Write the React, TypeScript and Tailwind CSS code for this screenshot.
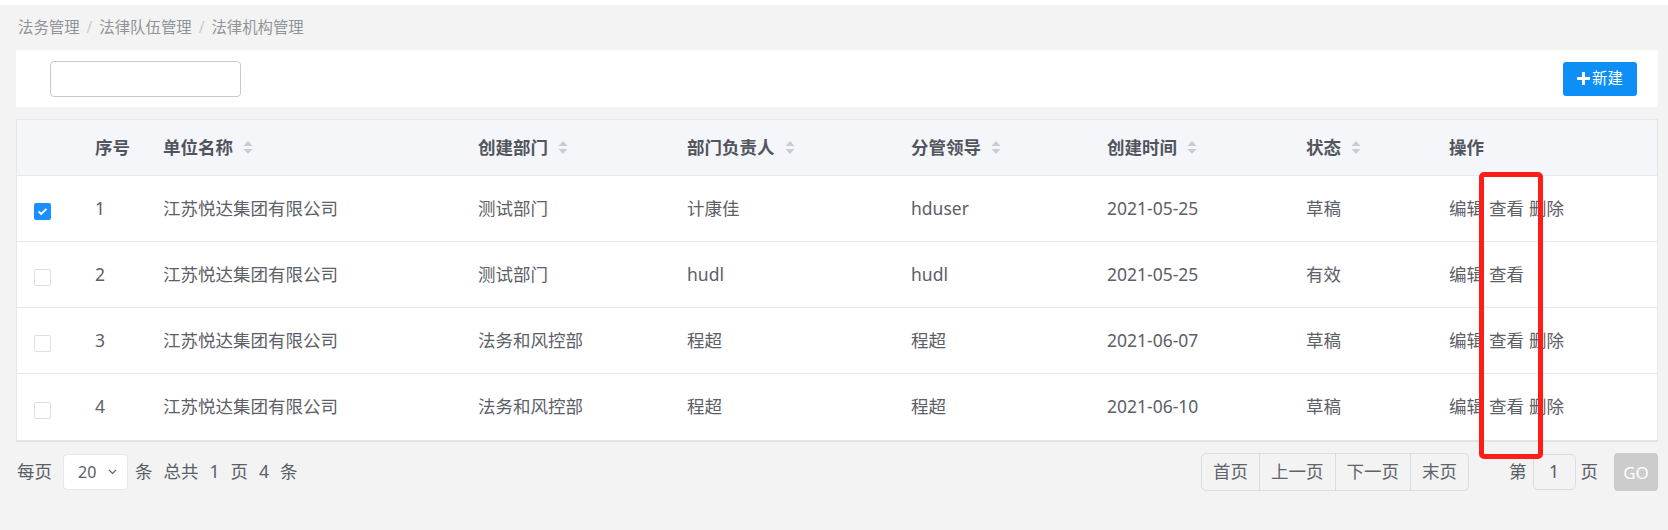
import React from 'react';

const rows = [
  { no: 1, unit: '江苏悦达集团有限公司', dept: '测试部门', head: '计康佳', leader: 'hduser', date: '2021-05-25', status: '草稿', checked: true, del: true },
  { no: 2, unit: '江苏悦达集团有限公司', dept: '测试部门', head: 'hudl', leader: 'hudl', date: '2021-05-25', status: '有效', checked: false, del: false },
  { no: 3, unit: '江苏悦达集团有限公司', dept: '法务和风控部', head: '程超', leader: '程超', date: '2021-06-07', status: '草稿', checked: false, del: true },
  { no: 4, unit: '江苏悦达集团有限公司', dept: '法务和风控部', head: '程超', leader: '程超', date: '2021-06-10', status: '草稿', checked: false, del: true },
];

const cols = 'grid grid-cols-[78px_68px_315px_209px_224px_196px_199px_143px_1fr]';

function SortIcon() {
  return (
    <svg width="10" height="15" viewBox="0 0 10 15" className="ml-[10px]">
      <path d="M5 1 L9.5 6 L0.5 6 Z" fill="#c9ccd2" />
      <path d="M5 14 L9.5 9 L0.5 9 Z" fill="#c9ccd2" />
    </svg>
  );
}

function Checkbox({ checked }: { checked: boolean }) {
  if (checked) {
    return (
      <span className="flex h-[17px] w-[17px] items-center justify-center rounded-[2px] bg-[#1890ff]">
        <svg width="11" height="9" viewBox="0 0 11 9">
          <path d="M1.5 4.5 L4.2 7 L9.5 1.8" fill="none" stroke="#fff" strokeWidth="1.8" />
        </svg>
      </span>
    );
  }
  return <span className="block h-[17px] w-[17px] rounded-[2px] border border-[#dcdfe6] bg-white" />;
}

function HeadCell({ label, sort = true }: { label: string; sort?: boolean }) {
  return (
    <div className="flex items-center">
      <span>{label}</span>
      {sort && <SortIcon />}
    </div>
  );
}

export default function App() {
  return (
    <div className="min-h-[530px] bg-[#f3f3f3] font-['Noto_Sans','Noto_Sans_CJK_SC',sans-serif] text-[#5c6068]">
      <div className="h-[5px] bg-white" />

      {/* breadcrumb */}
      <div className="flex h-[45px] items-center pl-[18px] text-[15.4px] leading-none text-[#909399]">
        <span>法务管理</span>
        <span className="mx-[7px] text-[#c8cbd0]">/</span>
        <span>法律队伍管理</span>
        <span className="mx-[7px] text-[#c8cbd0]">/</span>
        <span>法律机构管理</span>
      </div>

      {/* toolbar */}
      <div className="ml-[16px] mr-[10px] flex h-[57px] items-center justify-between bg-white pl-[34px] pr-[21px]">
        <input className="h-[36px] w-[191px] rounded-[4px] border border-[#c9c9c9] bg-white outline-none" />
        <button className="flex h-[34px] w-[74px] items-center justify-center gap-[2px] rounded-[3px] bg-[#0d8ff5] text-[15.4px] leading-none text-white">
          <svg width="13" height="13" viewBox="0 0 13 13">
            <path d="M5 0h3v5h5v3H8v5H5V8H0V5h5z" fill="#fff" />
          </svg>
          <span>新建</span>
        </button>
      </div>

      {/* table */}
      <div className="ml-[16px] mr-[10px] mt-[12px] border-x border-t border-[#e4e7ed] border-b-2 border-b-[#e3e3e3] bg-white text-[17.5px] leading-none">
        <div className={`${cols} h-[56px] items-center border-b border-[#e4e7ed] bg-[#f5f6fa] font-bold text-[#51555e]`}>
          <div />
          <div>序号</div>
          <HeadCell label="单位名称" />
          <HeadCell label="创建部门" />
          <HeadCell label="部门负责人" />
          <HeadCell label="分管领导" />
          <HeadCell label="创建时间" />
          <HeadCell label="状态" />
          <div>操作</div>
        </div>
        {rows.map((r, i) => (
          <div
            key={r.no}
            className={`${cols} h-[66px] items-center ${i < rows.length - 1 ? 'border-b border-[#e6e8eb]' : ''}`}
          >
            <div className="mt-[6px] pl-[17px]">
              <Checkbox checked={r.checked} />
            </div>
            <div>{r.no}</div>
            <div>{r.unit}</div>
            <div>{r.dept}</div>
            <div>{r.head}</div>
            <div>{r.leader}</div>
            <div>{r.date}</div>
            <div>{r.status}</div>
            <div className="flex gap-[5px]">
              <span>编辑</span>
              <span>查看</span>
              {r.del && <span>删除</span>}
            </div>
          </div>
        ))}
      </div>

      {/* pagination */}
      <div className="ml-[17px] mr-[10px] mt-[11px] flex items-center justify-between text-[17.5px] leading-none text-[#5a5e66]">
        <div className="flex items-center">
          <span>每页</span>
          <div className="ml-[11px] flex h-[36px] w-[65px] items-center rounded-[4px] border border-[#e4e7ed] bg-white pl-[14px]">
            <span className="text-[16px]">20</span>
            <svg width="9" height="6" viewBox="0 0 9 6" className="ml-[12px]">
              <path d="M1 1 L4.5 4.5 L8 1" fill="none" stroke="#606266" strokeWidth="1.2" />
            </svg>
          </div>
          <div className="ml-[7px] flex gap-[11px]">
            <span>条</span>
            <span>总共</span>
            <span>1</span>
            <span>页</span>
            <span>4</span>
            <span>条</span>
          </div>
        </div>
        <div className="flex items-center">
          <div className="flex h-[38px] overflow-hidden rounded-[5px] border border-[#d9dce1] text-[#5f636b]">
            <span className="flex items-center px-[11px]">首页</span>
            <span className="flex items-center border-l border-[#d9dce1] px-[11px]">上一页</span>
            <span className="flex items-center border-l border-[#d9dce1] px-[11px]">下一页</span>
            <span className="flex items-center border-l border-[#d9dce1] px-[11px]">末页</span>
          </div>
          <span className="ml-[40px]">第</span>
          <div className="ml-[6px] flex h-[36px] w-[43px] items-center justify-center rounded-[5px] border border-[#d9dce1]">
            1
          </div>
          <span className="ml-[5px]">页</span>
          <button className="ml-[16px] flex h-[38px] w-[44px] items-center justify-center rounded-[4px] bg-[#cccccc] text-[17px] text-white">
            GO
          </button>
        </div>
      </div>

      {/* annotation */}
      <div className="absolute left-[1479px] top-[172px] h-[287px] w-[64px] rounded-[5px] border-[5px] border-[#ff1d18]" />
    </div>
  );
}
